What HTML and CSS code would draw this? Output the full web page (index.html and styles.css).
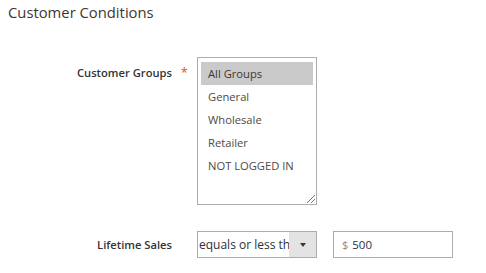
FILE: index.html
```html
<!DOCTYPE html>
<html lang="en">
<head>
<meta charset="UTF-8" />
<title>Customer Conditions</title>
<link rel="stylesheet" href="styles.css">
</head>
<body>

<div class="section">
    <h2 class="section-title">Customer Conditions</h2>

    <div class="field">
        <label class="field-label required">Customer Groups</label>
        <div class="listbox">
            <div class="option selected">All Groups</div>
            <div class="option">General</div>
            <div class="option">Wholesale</div>
            <div class="option">Retailer</div>
            <div class="option">NOT LOGGED IN</div>
            <span class="resize-grip"></span>
        </div>
    </div>

    <div class="field field-inline">
        <label class="field-label">Lifetime Sales</label>
        <div class="select">
            <span class="select-value">equals or less than</span>
            <span class="select-arrow"></span>
        </div>
        <div class="price-input">
            <span class="currency">$</span>
            <span class="amount">500</span>
        </div>
    </div>
</div>

</body>
</html>
```

FILE: styles.css
```css
body {
    margin: 0;
    background: #fff;
    font-family: "Open Sans", "Liberation Sans", sans-serif;
    color: #303030;
}

.section {
    padding: 0 0 0 8px;
}

.section-title {
    margin: 0;
    padding-top: 1px;
    font-size: 14.8px;
    font-weight: normal;
    color: #41362f;
    line-height: 22px;
}

.field {
    display: flex;
    align-items: flex-start;
    margin-top: 34px;
}

.field-label {
    width: 189px;
    padding-right: 25px;
    box-sizing: border-box;
    text-align: right;
    font-size: 11.2px;
    font-weight: 600;
    color: #333;
    line-height: 16px;
    padding-top: 8px;
    position: relative;
}

.field-label.required::after {
    content: "*";
    position: absolute;
    right: 9px;
    top: 7px;
    color: #eb5202;
    font-size: 13px;
    font-weight: normal;
}

.listbox {
    width: 120px;
    height: 148px;
    border: 1px solid #adadad;
    box-sizing: border-box;
    padding: 4px 3px;
    position: relative;
}

.option {
    height: 23px;
    line-height: 23px;
    padding-left: 7px;
    font-size: 11.2px;
    color: #514943;
    white-space: nowrap;
}

.option.selected {
    background: #cacaca;
    color: #41362f;
}

.resize-grip {
    position: absolute;
    right: 1px;
    bottom: 1px;
    width: 8px;
    height: 8px;
    background: linear-gradient(135deg, transparent 45%, #777 45%, #777 53%, transparent 53%, transparent 72%, #777 72%, #777 80%, transparent 80%);
}

.field-inline {
    margin-top: 26px;
    align-items: center;
}

.field-inline .field-label {
    padding-top: 0;
}

.select {
    width: 120px;
    height: 27px;
    border: 1px solid #adadad;
    box-sizing: border-box;
    display: flex;
    align-items: stretch;
    overflow: hidden;
}

.select-value {
    flex: 1;
    overflow: hidden;
    white-space: nowrap;
    font-size: 12px;
    line-height: 25px;
    padding-left: 1px;
    color: #303030;
}

.select-arrow {
    width: 27px;
    background: #e3e3e3;
    display: flex;
    align-items: center;
    justify-content: center;
}

.select-arrow::before {
    content: "";
    border-left: 3px solid transparent;
    border-right: 3px solid transparent;
    border-top: 4px solid #41362f;
}

.price-input {
    width: 120px;
    height: 27px;
    margin-left: 16px;
    border: 1px solid #adadad;
    box-sizing: border-box;
    display: flex;
    align-items: center;
    padding-left: 8px;
    font-size: 11.5px;
}

.currency {
    color: #8a8a8a;
    margin-right: 4px;
    font-size: 11px;
}

.amount {
    color: #303030;
}
```
